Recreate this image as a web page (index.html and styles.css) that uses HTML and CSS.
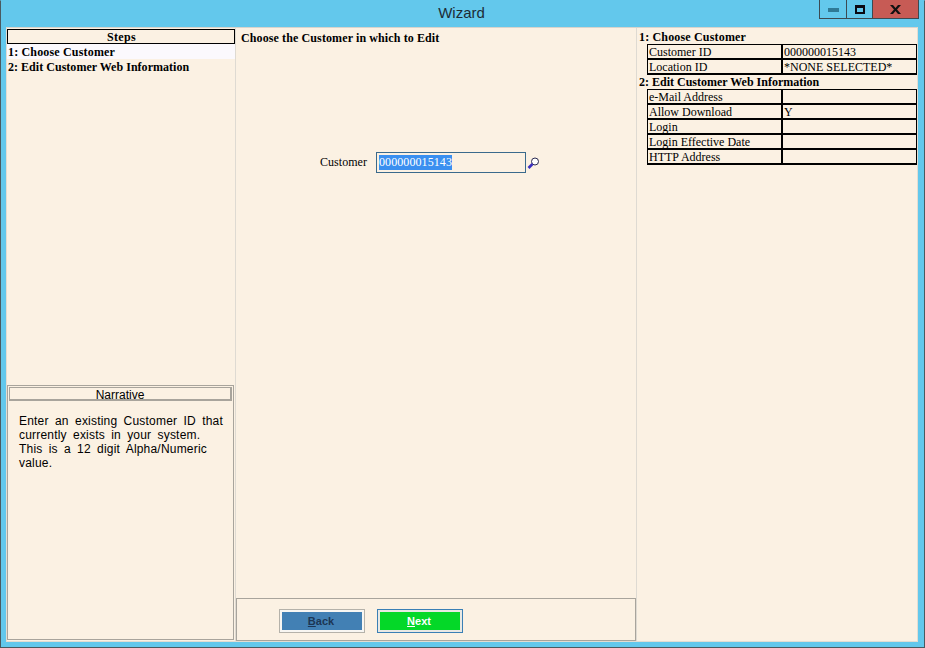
FILE: index.html
```html
<!DOCTYPE html>
<html lang="en">
<head>
<meta charset="utf-8">
<title>Wizard</title>
<link rel="stylesheet" href="styles.css">
</head>
<body>
<div class="window">
  <header class="titlebar">
    <div class="title">Wizard</div>
    <div class="controls">
      <div class="ctl ctl-min"><span class="min-glyph"></span></div>
      <div class="ctl ctl-max"><span class="max-glyph"></span></div>
      <div class="ctl ctl-close">
        <svg width="13" height="9" viewBox="0 0 13 9"><path d="M1 0h3l2.500 3L9 0h3L8 4.500 12 9H9L6.500 6 4 9H1l4-4.500z" fill="#111"/></svg>
      </div>
    </div>
  </header>
  <main class="client">
    <aside class="left">
      <section class="steps">
        <div class="steps-head">Steps</div>
        <div class="step step-active">1: Choose Customer</div>
        <div class="step">2: Edit Customer Web Information</div>
      </section>
      <section class="narrative">
        <div class="narrative-head">Narrative</div>
        <p class="narrative-text"><span class="just">Enter an existing Customer ID that</span><br>currently exists in your system.<br>This is a 12 digit Alpha/Numeric<br>value.</p>
      </section>
    </aside>
    <section class="center">
      <div class="center-body">
        <h1 class="page-title">Choose the Customer in which to Edit</h1>
        <div class="field">
          <label class="field-label">Customer</label>
          <div class="input"><span class="selected">000000015143</span></div>
          <svg class="lookup" width="13" height="12" viewBox="0 0 13 12">
            <circle cx="8" cy="4.500" r="3.500" fill="#fff" stroke="#2a2a50" stroke-width="1"/>
            <path d="M5.500 7L1.500 11" stroke="#3a2fc0" stroke-width="2.600"/>
          </svg>
        </div>
      </div>
      <footer class="buttons">
        <div class="btn btn-back"><span class="btn-face"><u>B</u>ack</span></div>
        <div class="btn btn-next"><span class="btn-face"><u>N</u>ext</span></div>
      </footer>
    </section>
    <aside class="right">
      <h2 class="sum-title sum-title-first">1: Choose Customer</h2>
      <table class="sum">
        <tr><td class="k">Customer ID</td><td>000000015143</td></tr>
        <tr><td class="k">Location ID</td><td>*NONE SELECTED*</td></tr>
      </table>
      <h2 class="sum-title">2: Edit Customer Web Information</h2>
      <table class="sum">
        <tr><td class="k">e-Mail Address</td><td></td></tr>
        <tr><td class="k">Allow Download</td><td>Y</td></tr>
        <tr><td class="k">Login</td><td></td></tr>
        <tr><td class="k">Login Effective Date</td><td></td></tr>
        <tr><td class="k">HTTP Address</td><td></td></tr>
      </table>
    </aside>
  </main>
</div>
</body>
</html>
```
FILE: styles.css
```css
* { box-sizing: border-box; }
html, body { margin: 0; height: 100%; overflow: hidden; }
body { font-family: "Liberation Serif", serif; font-size: 12px; color: #000; }

.window {
  width: 925px; height: 648px;
  background: #63c8ec;
  border: 1px solid #4a5a60;
  border-top-color: #63c8ec;
  display: flex; flex-direction: column;
  padding: 0 6px 5px 5px;
}
.titlebar { height: 26px; flex: none; position: relative; }
.title {
  text-align: center;
  font: 15px/24px "Liberation Sans", sans-serif;
  color: #1c2c36;
  padding-right: 1px;
}
.controls { position: absolute; top: -1px; right: -1px; display: flex; height: 19px; }
.ctl {
  height: 19px; border: 1px solid #3c4a52; border-top: 0;
  display: flex; align-items: center; justify-content: center;
}
.ctl-min { width: 28px; }
.ctl-max { width: 26px; border-left: 0; }
.ctl-close { width: 46px; border-left: 0; background: #c75b55; }
.min-glyph { width: 11px; height: 4px; background: #2f7a96; margin-top: 1px; }
.max-glyph { width: 10px; height: 9px; border: 2px solid #0a0a14; border-top-width: 3px; }

.client {
  flex: 1; min-height: 0;
  background: #fbf1e3;
  border: 1px solid #e3ddd2;
  border-top-color: #d8d4cc;
  display: grid;
  grid-template-columns: 229px 401px 1fr;
}

.left { display: flex; flex-direction: column; border-right: 1px solid #dedad2; }
.steps { height: 356px; flex: none; padding-top: 1px; }
.steps-head {
  border: 1px solid #000;
  height: 15px;
  text-align: center; font-weight: bold; font-size: 12px; line-height: 14px;
  letter-spacing: .3px;
  padding-left: 1px;
}
.step { height: 15px; font-weight: bold; font-size: 12px; line-height: 15px; padding: 1px 0 0 1px; letter-spacing: .03px; }
.step-active { background: #fbf9fd; letter-spacing: .17px; }

.narrative {
  flex: 1; margin: 1px 1px 1px 0;
  border: 1px solid #a8a49c;
  padding: 1px;
  display: flex; flex-direction: column;
}
.narrative-head {
  height: 14px; border: 1px solid #a8a49c; border-width: 1px 2px 2px 1px;
  text-align: center;
  font: 12px/15px "Liberation Sans", sans-serif;
}
.narrative-text {
  margin: 13px 9px 0 10px;
  font: 12px/14px "Liberation Sans", sans-serif;
  letter-spacing: .2px;
  word-spacing: 2.700px;
}
.just { display: inline-block; width: 100%; text-align: justify; text-align-last: justify; word-spacing: 0; }

.center { display: flex; flex-direction: column; border-right: 1px solid #dedad2; }
.center-body { flex: 1; min-height: 0; padding: 3px 0 0 5px; }
.page-title { margin: 0; font-size: 12px; font-weight: bold; line-height: 15px; letter-spacing: .11px; }
.field { display: flex; align-items: center; margin-top: 106px; height: 21px; }
.field-label { width: 126px; text-align: right; font-size: 12px; margin-right: 9px; letter-spacing: .05px; }
.input {
  width: 150px; height: 21px; border: 1px solid #3a6a8c; background: #fbf1e3;
  padding: 2px 0 0 2px; font-size: 12px; line-height: 15px;
}
.selected { display: inline-block; background: #3a8ff0; color: #fff; height: 15px; letter-spacing: .08px; }
.lookup { margin-left: 1px; }

.buttons {
  flex: none; height: 43px;
  border: 1px solid #a8a49c;
  display: flex; gap: 12px; padding: 10px 0 0 42px;
}
.btn { width: 86px; height: 24px; padding: 2px; border: 1px solid #b5b2aa; background: #f8f6f2; }
.btn-next { border-color: #3a7fb5; background: #e8e8e4; }
.btn-face {
  display: block; height: 18px; text-align: center; padding-right: 2px;
  font: bold 11px/18px "Liberation Sans", sans-serif;
}
.btn-back .btn-face { background: #4280b4; color: #1c3654; }
.btn-next .btn-face { background: #04d828; color: #fff; }

.right { padding: 2px 0 0 2px; }
.sum-title { margin: 0 0 -1px; font-size: 12px; font-weight: bold; line-height: 15px; }
.sum-title-first { letter-spacing: .17px; }
.sum {
  border-collapse: separate; border-spacing: 0;
  margin-left: 8px; width: 270px; table-layout: fixed;
  border-top: 1px solid #000; border-left: 1px solid #000;
}
.sum td {
  height: 15px; padding: 1px 0 0 1px; font-size: 12px; line-height: 12px;
  border-bottom: 2px solid #000; border-right: 1px solid #000;
  white-space: nowrap; overflow: hidden;
}
.sum td.k { width: 135px; border-right-width: 2px; }
```
